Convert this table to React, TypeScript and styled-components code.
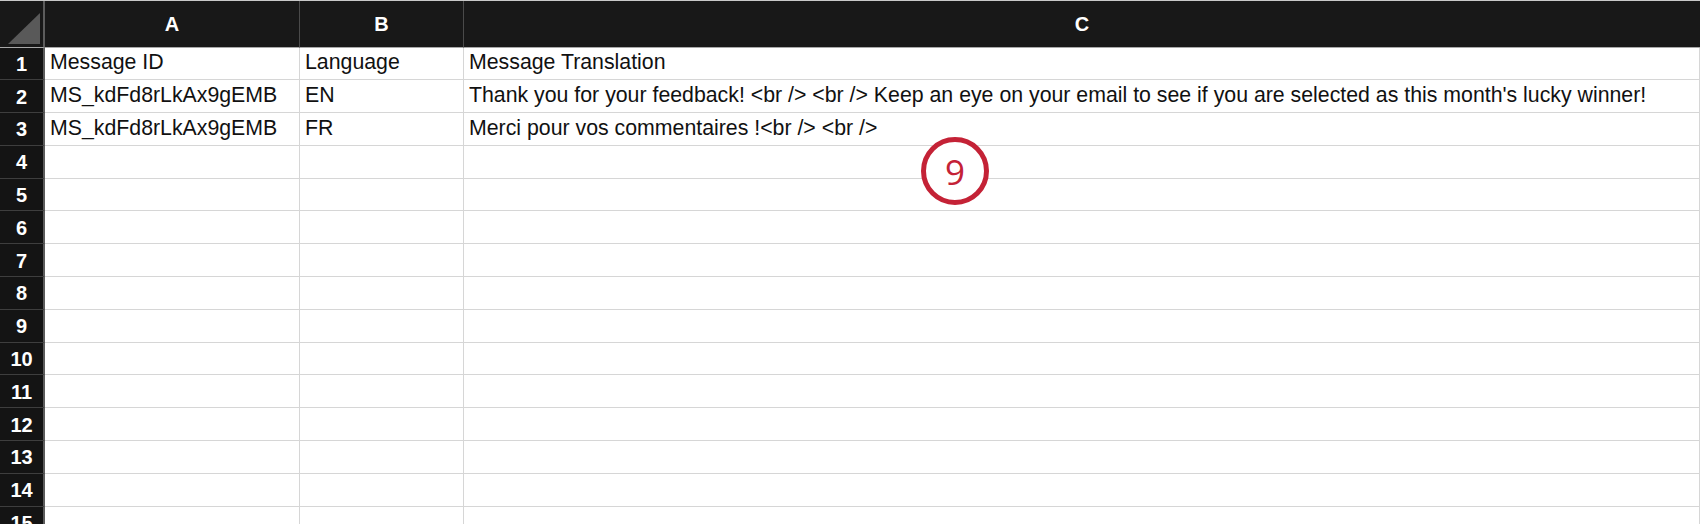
import React from "react";
import styled, { createGlobalStyle } from "styled-components";

const GlobalStyle = createGlobalStyle`
  html, body {
    margin: 0;
    padding: 0;
    background: #ffffff;
    overflow: hidden;
  }
  body {
    font-family: "Liberation Sans", Arial, sans-serif;
  }
`;

const Page = styled.div`
  position: relative;
  width: 1700px;
  height: 524px;
  overflow: hidden;
  border-top: 1px solid #c8c8c8;
  box-sizing: border-box;
`;

const Sheet = styled.div`
  display: grid;
  grid-template-columns: 45px 255px 164px 1fr;
  grid-template-rows: 46.5px;
  grid-auto-rows: 32.8px;
`;

const Corner = styled.div`
  position: relative;
  background: #181818;
  border-right: 2px solid #5c5c5c;
  border-bottom: 1px solid #a8a8a8;
  box-sizing: border-box;
`;

const CornerTriangle = styled.svg`
  position: absolute;
  left: 8px;
  top: 12px;
`;

const ColHeader = styled.div<{ $last?: boolean }>`
  background: #181818;
  color: #ffffff;
  font-size: 20px;
  font-weight: 700;
  display: flex;
  align-items: center;
  justify-content: center;
  padding-top: 2px;
  border-right: ${(p) => (p.$last ? "none" : "1px solid #4a4a4a")};
  border-bottom: 1px solid #a8a8a8;
  box-sizing: border-box;
`;

const RowHeader = styled.div`
  background: #141414;
  color: #ffffff;
  font-size: 20px;
  font-weight: 700;
  display: flex;
  align-items: center;
  justify-content: center;
  padding-top: 2px;
  border-right: 2px solid #5c5c5c;
  border-bottom: 1px solid #3e3e3e;
  box-sizing: border-box;
`;

const Cell = styled.div`
  color: #111111;
  font-size: 21.3px;
  line-height: 24px;
  display: flex;
  align-items: flex-end;
  padding-left: 5px;
  padding-bottom: 5px;
  white-space: nowrap;
  overflow: visible;
  border-right: 1px solid #d6d6d6;
  border-bottom: 1px solid #d6d6d6;
  box-sizing: border-box;
`;

const Marker = styled.div`
  position: absolute;
  left: 921px;
  top: 136px;
  width: 68px;
  height: 68px;
  border: 5px solid #c42236;
  border-radius: 50%;
  box-sizing: border-box;
  background: #ffffff;
  color: #c42236;
  font-family: "Open Sans", sans-serif;
  font-size: 35px;
  display: flex;
  align-items: center;
  justify-content: center;
`;

const rows: string[][] = [
  ["Message ID", "Language", "Message Translation"],
  [
    "MS_kdFd8rLkAx9gEMB",
    "EN",
    "Thank you for your feedback! <br /> <br /> Keep an eye on your email to see if you are selected as this month's lucky winner!",
  ],
  ["MS_kdFd8rLkAx9gEMB", "FR", "Merci pour vos commentaires !<br /> <br />"],
];

const App = () => {
  const total = 15;
  const body = [];
  for (let i = 0; i < total; i++) {
    const data = rows[i] || ["", "", ""];
    body.push(
      <React.Fragment key={i}>
        <RowHeader>{i + 1}</RowHeader>
        <Cell>{data[0]}</Cell>
        <Cell>{data[1]}</Cell>
        <Cell>{data[2]}</Cell>
      </React.Fragment>
    );
  }

  return (
    <Page>
      <GlobalStyle />
      <Sheet>
        <Corner>
          <CornerTriangle width="32" height="31" viewBox="0 0 32 31">
            <polygon points="0,31 32,31 32,0" fill="#595959" />
          </CornerTriangle>
        </Corner>
        <ColHeader>A</ColHeader>
        <ColHeader>B</ColHeader>
        <ColHeader $last>C</ColHeader>
        {body}
      </Sheet>
      <Marker>9</Marker>
    </Page>
  );
};

export default App;
